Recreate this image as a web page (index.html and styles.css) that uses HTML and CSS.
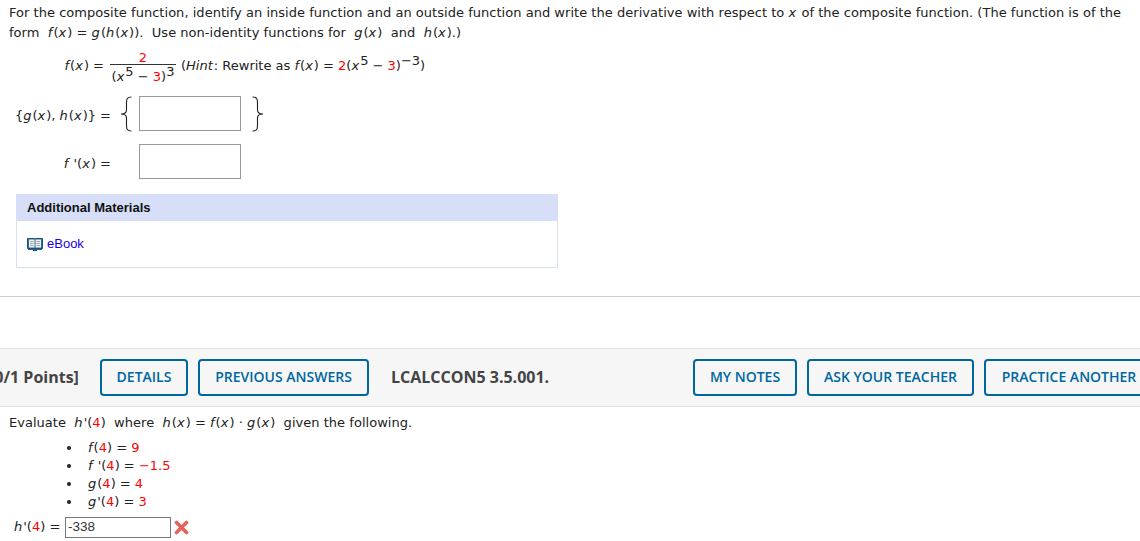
FILE: index.html
```html
<!DOCTYPE html>
<html lang="en">
<head>
<meta charset="utf-8">
<title>Composite function</title>
<link rel="stylesheet" href="styles.css">
</head>
<body>
<section class="q q-first">
  <p class="prompt">For the composite function, identify an inside function and an outside function and write the derivative with respect to <i>x</i> of the composite function. (The function is of the form&nbsp; <i>f</i>(<i>x</i>) = <i>g</i>(<i>h</i>(<i>x</i>)).&nbsp; Use non-identity functions for&nbsp; <i>g</i>(<i>x</i>)&nbsp; and&nbsp; <i>h</i>(<i>x</i>).)</p>
  <div class="eq-one">
    <span class="eq-label"><i>f</i>(<i>x</i>) =</span>
    <span class="frac"><span class="num red">2</span><span class="den">(<i>x</i><sup>5</sup> − <span class="red">3</span>)<sup>3</sup></span></span>
    <span class="hint">(<i>Hint</i>: Rewrite as <i>f</i>(<i>x</i>) = <span class="red">2</span>(<i>x</i><sup>5</sup> − <span class="red">3</span>)<sup>−3</sup>)</span>
  </div>
  <div class="answers">
    <span class="ans-label">{<i>g</i>(<i>x</i>), <i>h</i>(<i>x</i>)} =</span>
    <svg class="brace" width="14" height="36" viewBox="0 0 14 36"><path d="M12.500 1C8 1 7.500 3 7.500 7V14C7.500 16 6 18 2 18C6 18 7.500 20 7.500 22V29C7.500 33 8 35 12.500 35" fill="none" stroke="#222" stroke-width="1.100"/></svg>
    <span class="box"></span>
    <svg class="brace" width="14" height="36" viewBox="0 0 14 36"><path d="M1.500 1C6 1 6.500 3 6.500 7V14C6.500 16 8 18 12 18C8 18 6.500 20 6.500 22V29C6.500 33 6 35 1.500 35" fill="none" stroke="#222" stroke-width="1.100"/></svg>
    <span class="ans-label"><i>f</i> '(<i>x</i>) =</span>
    <span></span>
    <span class="box"></span>
  </div>
  <div class="materials">
    <h3 class="materials-head">Additional Materials</h3>
    <div class="materials-body">
      <svg class="book" width="16" height="14" viewBox="0 0 16 14"><path d="M0.500 1.500H7.500L8 2.500L8.500 1.500H15.500V11.500H0.500Z" fill="#2f6f9f" stroke="#1f4f7a"/><path d="M2 2.500H7.500V10.500H2ZM8.500 2.500H14V10.500H8.500Z" fill="#eef0ea"/><path d="M3 4.500H6.500M3 6.500H6.500M3 8.500H6.500M9.500 4.500H13M9.500 6.500H13M9.500 8.500H13" stroke="#a0a8ac"/><path d="M1 12.500H15" stroke="#2a5f8f"/><path d="M6 13.500H10" stroke="#1f4f7a"/></svg>
      <a class="ebook" href="#">eBook</a>
    </div>
  </div>
</section>
<hr class="rule">
<header class="bar">
  <span class="points">[0/1 Points]</span>
  <a class="btn btn-details" href="#">DETAILS</a>
  <a class="btn btn-prev" href="#">PREVIOUS ANSWERS</a>
  <span class="code">LCALCCON5 3.5.001.</span>
  <a class="btn btn-notes" href="#">MY NOTES</a>
  <a class="btn btn-ask" href="#">ASK YOUR TEACHER</a>
  <a class="btn btn-practice" href="#">PRACTICE ANOTHER</a>
</header>
<section class="q q-second">
  <p class="prompt two">Evaluate&nbsp; <i>h</i>'(<span class="red">4</span>)&nbsp; where&nbsp; <i>h</i>(<i>x</i>) = <i>f</i>(<i>x</i>) · <i>g</i>(<i>x</i>)&nbsp; given the following.</p>
  <ul class="givens">
    <li><i>f</i>(<span class="red">4</span>) = <span class="red">9</span></li>
    <li><i>f</i> '(<span class="red">4</span>) = <span class="red">−1.5</span></li>
    <li><i>g</i>(<span class="red">4</span>) = <span class="red">4</span></li>
    <li><i>g</i>'(<span class="red">4</span>) = <span class="red">3</span></li>
  </ul>
  <div class="reply">
    <span class="reply-label"><i>h</i>'(<span class="red">4</span>) =</span>
    <span class="field">-338</span>
    <svg class="wrong" width="15" height="15" viewBox="0 0 15 15"><path d="M2.500 2.500L12.500 12.500M12.500 2.500L2.500 12.500" stroke="#e8605a" stroke-width="3.600" stroke-linecap="round"/></svg>
  </div>
</section>
</body>
</html>
```
FILE: styles.css
```css
html, body { margin: 0; padding: 0; background: #fff; }
body {
  width: 1140px;
  height: 541px;
  overflow: hidden;
  font-family: "DejaVu Sans", Verdana, sans-serif;
  font-size: 13px;
  line-height: 20px;
  color: #222;
}
i { padding-right: 1px; }
.red { color: #f00; }
sup { font-size: 13px; line-height: 0; vertical-align: 5px; }
.q-first { padding: 3px 9px 0; }
.prompt { margin: 0; width: 1125px; letter-spacing: 0.03px; }
.eq-one { display: flex; align-items: center; height: 50px; margin-top: -2px; }
.eq-label { width: 95px; text-align: right; }
.frac { display: inline-flex; flex-direction: column; align-items: center; align-self: flex-start; width: 66px; margin: 10px 0 0 6px; line-height: 15px; }
.num { width: 100%; line-height: 13px; text-align: center; border-bottom: 1px solid #333; }
.den { padding-top: 4px; white-space: nowrap; }
.hint { margin-left: 5px; white-space: nowrap; }
.answers {
  display: grid;
  grid-template-columns: 102px 28px 102px 24px;
  grid-auto-rows: 35px;
  row-gap: 13px;
  align-items: center;
  margin-top: 5px;
}
.ans-label { text-align: right; white-space: nowrap; padding-top: 4px; }
.brace { justify-self: center; }
.brace:first-of-type { margin-left: 2px; }
.answers .box { box-sizing: border-box; width: 102px; height: 35px; border: 1px solid #999; background: #fff; }
.answers .box + .brace { justify-self: end; }
.materials { width: 542px; margin: 15px 0 0 7px; box-sizing: border-box; border: 1px solid #d6def8; border-top: 0; }
.materials-head {
  margin: 0 -1px;
  height: 27px;
  padding: 0 11px;
  background: #d6def8;
  font: bold 13px/27px "Liberation Sans", Arial, sans-serif;
  color: #111;
}
.materials-body { display: flex; align-items: center; gap: 4px; height: 46px; padding-left: 10px; box-sizing: border-box; padding-bottom: 1px; }
.ebook { font: 13px/16px "Liberation Sans", Arial, sans-serif; color: #1a00d6; text-decoration: none; }
.rule { margin: 28px 0 0; border: 0; border-top: 1px solid #ccc; height: 0; }
.bar {
  display: flex;
  align-items: center;
  box-sizing: border-box;
  width: 1154px;
  height: 59px;
  margin-top: 51px;
  background: #f6f6f6;
  border-top: 1px solid #e2e2e2;
  border-bottom: 1px solid #e2e2e2;
  font-family: "Open Sans", sans-serif;
  white-space: nowrap;
}
.points { margin-left: -11px; width: 111px; font-size: 16px; font-weight: 700; color: #444; padding-bottom: 2px; }
.btn {
  display: flex;
  align-items: center;
  justify-content: center;
  box-sizing: border-box;
  height: 37px;
  padding-bottom: 2px;
  border: 2px solid #00669e;
  border-radius: 4px;
  font-size: 14px;
  font-weight: 600;
  color: #00669e;
  text-decoration: none;
}
.btn-details { width: 88px; }
.btn-prev { width: 171px; margin-left: 10px; }
.code { margin-left: 22px; width: 302px; font-size: 16px; font-weight: 700; color: #444; padding-bottom: 2px; }
.btn-notes { width: 104px; }
.btn-ask { width: 167px; margin-left: 10px; }
.btn-practice { width: 170px; margin-left: 10px; }
.q-second { padding: 6px 9px 0; }
.two { width: auto; }
.givens { margin: 6px 0 0; padding: 0 0 0 73px; line-height: 18px; }
.givens li { padding-left: 6px; }
.reply { display: flex; align-items: center; height: 22px; margin-top: 5px; }
.reply-label { margin-left: 5px; width: 51px; white-space: nowrap; }
.field {
  box-sizing: border-box;
  width: 106px;
  height: 21px;
  border: 1px solid #777;
  padding-left: 2px;
  font: 13.500px/18px "Liberation Sans", Arial, sans-serif;
  color: #333;
}
.wrong { margin-left: 3px; }
```
